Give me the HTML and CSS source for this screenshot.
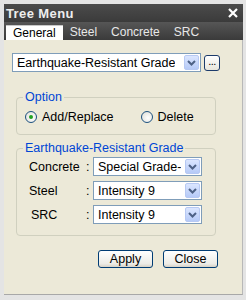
FILE: index.html
```html
<!DOCTYPE html>
<html>
<head>
<meta charset="utf-8">
<link rel="stylesheet" href="styles.css">
</head>
<body>
<div class="window">
  <div class="titlebar">
    <span class="title">Tree Menu</span>
    <svg class="close" width="10" height="10" viewBox="0 0 10 10"><path d="M1 1L9 9M9 1L1 9" stroke="#ffffff" stroke-width="2.2"/></svg>
  </div>
  <div class="tabs">
    <div class="tab active">General</div>
    <div class="tab">Steel</div>
    <div class="tab">Concrete</div>
    <div class="tab">SRC</div>
  </div>
  <div class="panel">
    <div class="toprow">
      <div class="select wide"><span class="val">Earthquake-Resistant Grade</span><span class="arrow"><svg width="9" height="6" viewBox="0 0 9 6"><path d="M1 1L4.5 4.5L8 1" fill="none" stroke="#4d6185" stroke-width="2"/></svg></span></div>
      <div class="dots">...</div>
    </div>
    <fieldset class="group opt">
      <legend>Option</legend>
      <div class="radios">
        <label class="radio"><span class="circle on"></span>Add/Replace</label>
        <label class="radio"><span class="circle"></span>Delete</label>
      </div>
    </fieldset>
    <fieldset class="group grade">
      <legend>Earthquake-Resistant Grade</legend>
      <div class="grid">
        <span class="lbl">Concrete</span><span class="colon">:</span>
        <div class="select"><span class="val">Special Grade-</span><span class="arrow"><svg width="9" height="6" viewBox="0 0 9 6"><path d="M1 1L4.5 4.5L8 1" fill="none" stroke="#4d6185" stroke-width="2"/></svg></span></div>
        <span class="lbl">Steel</span><span class="colon">:</span>
        <div class="select"><span class="val">Intensity 9</span><span class="arrow"><svg width="9" height="6" viewBox="0 0 9 6"><path d="M1 1L4.5 4.5L8 1" fill="none" stroke="#4d6185" stroke-width="2"/></svg></span></div>
        <span class="lbl src">SRC</span><span class="colon">:</span>
        <div class="select"><span class="val">Intensity 9</span><span class="arrow"><svg width="9" height="6" viewBox="0 0 9 6"><path d="M1 1L4.5 4.5L8 1" fill="none" stroke="#4d6185" stroke-width="2"/></svg></span></div>
      </div>
    </fieldset>
    <div class="buttons">
      <div class="btn">Apply</div>
      <div class="btn">Close</div>
    </div>
  </div>
</div>
</body>
</html>
```
FILE: styles.css
```css
html, body {
  margin: 0;
  padding: 0;
  background: #e6e6e6;
}
body {
  font-family: "Liberation Sans", Arial, sans-serif;
  font-size: 12px;
  color: #000;
}
.window {
  width: 246px;
  height: 300px;
  box-sizing: border-box;
  padding: 4px 3px 5px 4px;
  background: #e4e4e4;
  display: flex;
  flex-direction: column;
}
.titlebar {
  height: 18px;
  flex: none;
  background: linear-gradient(#4b4b4b, #3b3b3b);
  color: #eeeeee;
  display: flex;
  align-items: center;
  justify-content: space-between;
  padding: 0 5px 0 2px;
}
.title {
  font-weight: bold;
  font-size: 13px;
  letter-spacing: 0.4px;
}
.tabs {
  height: 18px;
  flex: none;
  background: linear-gradient(#565656, #3a3a3a);
  display: flex;
  align-items: flex-end;
  padding-left: 2px;
}
.tab {
  height: 15px;
  line-height: 15px;
  padding: 0 7px;
  color: #e8e8e8;
  font-size: 12px;
}
.tab.active {
  background: #ffffff;
  color: #000;
  border-top: 1px solid #c8c8c8;
  height: 14px;
}
.panel {
  flex: 1;
  background: #ece9d8;
  border-right: 1px solid #b8b8b8;
  border-bottom: 1px solid #a8a8a8;
  padding: 13px 0 0 8px;
  display: flex;
  flex-direction: column;
  font-size: 12.5px;
}
.toprow {
  display: flex;
  align-items: center;
  gap: 3px;
}
.select {
  height: 19px;
  box-sizing: border-box;
  border: 1px solid #7f9db9;
  background: #fff;
  display: flex;
  align-items: center;
  justify-content: space-between;
  padding: 1px;
}
.select .val {
  padding-left: 3px;
  white-space: nowrap;
  overflow: hidden;
}
.select.wide {
  width: 189px;
}
.arrow {
  width: 15px;
  height: 15px;
  box-sizing: border-box;
  border: 1px solid #b7c9f3;
  border-radius: 2px;
  background: linear-gradient(#dbe6ff, #b6caf7);
  display: flex;
  align-items: center;
  justify-content: center;
  flex: none;
}
.dots {
  width: 16px;
  height: 16px;
  box-sizing: border-box;
  border: 1px solid #1c3b6b;
  border-radius: 3px;
  background: linear-gradient(#ffffff, #e8e6dc);
  font-size: 11px;
  line-height: 10px;
  text-align: center;
  letter-spacing: -0.5px;
}
.group {
  margin: 0;
  width: 200px;
  box-sizing: border-box;
  border: 1px solid #d0d0bf;
  border-radius: 4px;
  margin-left: 4px;
  padding: 0;
}
.group legend {
  color: #0046d5;
  padding: 0 2px;
  margin-left: 6px;
}
.opt {
  margin-top: 18px;
  height: 45px;
}
.radios {
  display: flex;
  gap: 27px;
  padding: 6px 0 0 8px;
}
.radio {
  display: flex;
  align-items: center;
  gap: 5px;
}
.circle {
  width: 12px;
  height: 12px;
  box-sizing: border-box;
  border: 1px solid #1c5180;
  border-radius: 50%;
  background: radial-gradient(circle at 60% 60%, #ffffff, #dcdcd4);
  position: relative;
  display: inline-block;
}
.circle.on::after {
  content: "";
  position: absolute;
  left: 3px;
  top: 3px;
  width: 4px;
  height: 4px;
  border-radius: 50%;
  background: #21a121;
}
.grade {
  margin-top: 6px;
  height: 95px;
}
.grid {
  display: grid;
  grid-template-columns: 57px 7px 109px;
  row-gap: 5px;
  align-items: center;
  padding: 2px 0 0 12px;
}
.lbl.src {
  padding-left: 2px;
}
.buttons {
  display: flex;
  gap: 10px;
  margin-top: 14px;
  padding-left: 86px;
}
.btn {
  width: 55px;
  height: 18px;
  box-sizing: border-box;
  border: 1px solid #003c74;
  border-radius: 3px;
  background: linear-gradient(#ffffff, #ecebe6 80%, #d6d0c5);
  text-align: center;
  line-height: 16px;
}
```
